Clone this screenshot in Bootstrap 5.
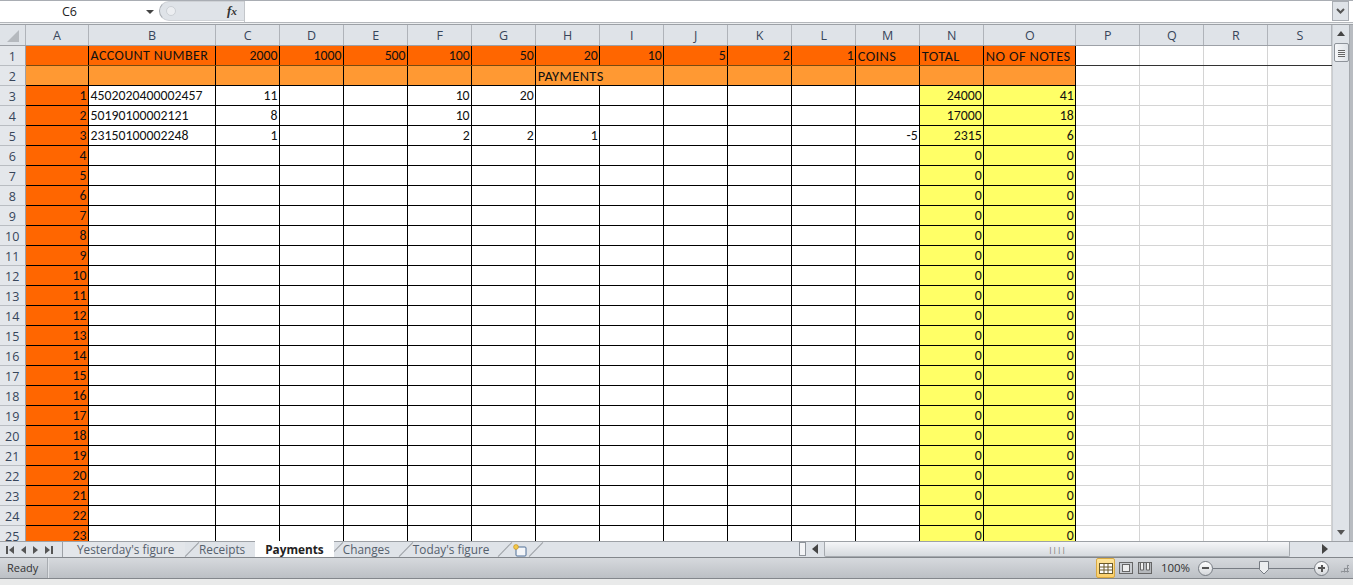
<!DOCTYPE html>
<html lang="en">
<head>
<meta charset="utf-8">
<title>Payments</title>
<link rel="stylesheet" href="https://cdn.jsdelivr.net/npm/bootstrap@5.3.0/dist/css/bootstrap.min.css">
<style>
html,body{height:585px;overflow:hidden;margin:0}
body{font-family:"Liberation Sans",Arial,sans-serif;background:#e9eaea;color:#000}
.xl-formula{height:22px;background:#fff;border-top:1px solid #a9adb3;flex:none}
.xl-name{width:159px;font:12.5px "Open Sans",sans-serif;color:#222;padding-left:62px;line-height:21px;position:relative}
.xl-name i{position:absolute;left:146px;top:9px;border:4px solid transparent;border-top:4px solid #444;border-bottom:0}
.xl-pill{width:85px;background:#dfe3e8;border-radius:11px 0 0 11px;border-left:1px solid #a9adb3;border-top:1px solid #cfd2d6;border-bottom:1px solid #cfd2d6;position:relative;font:italic bold 13px "Liberation Serif",serif;color:#333;text-align:right;padding-right:7px;line-height:18px;margin-bottom:1px}
.xl-pill b{position:absolute;left:6px;top:4px;width:10px;height:10px;border-radius:50%;background:#eceef1;border:1px solid #ccd0d5}
.xl-input{flex:1;border-left:1px solid #c3c6ca}
.xl-fdrop{width:17px;margin-right:4px;background:#dfe3e8;border:1px solid #a9adb3;display:flex;align-items:center;justify-content:center;margin-bottom:1px}
.xl-gap{height:3px;flex:none;background:#eceef0;border-top:1px solid #b4b7bb;border-bottom:1px solid #9da1a6}
.xl-sheet{height:516px;flex:none;overflow:hidden}
.xl-gridwrap{width:1332px;overflow:hidden;height:516px;background:#fff}
.xl-grid{table-layout:fixed;width:1332px}
.xl-grid th,.xl-grid td{height:20px;padding:0 1px 0 2px;line-height:19px;white-space:nowrap;overflow:hidden;box-sizing:border-box}
.xl-grid td{border:1px solid #d4d4d4;text-align:right;font:13.8px Carlito,Lato,sans-serif;color:#111}
.xl-grid thead th{background:#dfe3e8;font:12.5px "Open Sans",sans-serif;color:#37455a;text-align:center;border-right:1px solid #afb3b9;border-bottom:1px solid #9da1a7;font-weight:400;line-height:19px;padding-top:1px}
.xl-grid tbody th{background:#e4e7eb;font:12.5px "Open Sans",sans-serif;color:#37455a;text-align:center;border-right:1px solid #9da1a7;border-bottom:1px solid #b9bdc2;font-weight:400;padding:1px 0 0}
.xl-grid td.bk{border-color:#000}
.xl-grid tr.rule td.bk{border-bottom-color:#7a4a10}
.xl-grid td.txt{text-align:left;padding-left:2px}
.xl-grid td.cap{font-size:14.4px;letter-spacing:.4px;overflow:visible}
.xl-grid td.cap2{font-size:14px}
.xl-o1{background:#ff6600}
.xl-o2{background:#ff9933}
.xl-y{background:#ffff66}
.xl-corner{position:relative}
.xl-corner svg{position:absolute;left:7px;top:5px}
.xl-grid tr.rule td.pl{border-bottom-color:#333}
.xl-vs{width:17px;background:#dfe3e8;border-left:1px solid #c8ccd1;position:relative}
.xl-vthumb{position:absolute;top:18px;left:1px;width:15px;height:19px;background:linear-gradient(90deg,#f6f7f9,#dfe3e8);border:1px solid #8e939a;border-radius:2px}
.xl-vthumb::after{content:"";position:absolute;left:3px;right:3px;top:6px;height:7px;background:repeating-linear-gradient(#666 0 1px,#f2f3f5 1px 2px)}
.xl-up,.xl-dn{position:absolute;left:4px;border:4px solid transparent}
.xl-up{top:6px;border-top:0;border-bottom:5px solid #444}
.xl-dn{bottom:6px;border-bottom:0;border-top:5px solid #555}
.xl-rail{width:4px;background:#b8bcc1;border-left:1px solid #a5a9ae}
.xl-tabs{height:16px;flex:none;background:#dfe3e8;border-top:1px solid #9da1a6;font:11.8px "Open Sans",sans-serif;color:#55606c;line-height:14px;position:relative}
.xl-navs{width:62px;display:flex;gap:7px;align-items:center;padding-left:6px;flex:none}
.xl-tab{position:relative;height:15px;white-space:nowrap;padding:0 0 0 14px}
.xl-tab::before{content:"";position:absolute;left:-3px;top:7px;width:20px;border-top:1px solid #9da1a6;transform:rotate(-46deg)}
.xl-tab.first{padding-left:14px;width:123px;border-left:1px solid #9da1a6;background:#e3e6ea}
.xl-tab.first::before{display:none}
.xl-tab.on{background:#fff;color:#222;font-weight:700;margin-top:-1px;height:16px;padding:1px 10px;margin-left:10px;z-index:1}
.xl-tab.on::before{display:none}
.xl-tab.mv1{margin-left:-5px}
.xl-tab.mv2{margin-left:9px}
.xl-tab.last{margin-left:9px;padding-left:15px;padding-right:18px}
.xl-tab.last::after{content:"";position:absolute;right:-1px;top:7px;width:20px;border-top:1px solid #9da1a6;transform:rotate(-46deg)}
.xl-split{position:absolute;left:799px;top:0;width:7px;height:14px;background:#f3f4f6;border:1px solid #8e939a}
.xl-hl{position:absolute;left:812px;top:2px;border:5px solid transparent;border-left:0;border-right:6px solid #444}
.xl-hr{position:absolute;left:1322px;top:2px;border:5px solid transparent;border-right:0;border-left:6px solid #444}
.xl-hthumb{position:absolute;left:824px;top:0;width:466px;height:15px;background:linear-gradient(#f5f6f8,#d6dade);border:1px solid #a5a9ae;border-top:0;border-radius:0 0 2px 2px;text-align:center;font-size:8px;line-height:14px;color:#666}
.xl-status{height:22px;flex:none;background:linear-gradient(#d6d9dd,#bcc0c5);border-top:1px solid #83878c;border-bottom:1px solid #83878c;font:11px "Open Sans",sans-serif;color:#333;line-height:20px}
.xl-ready{width:48px;padding-left:7px;border-right:1px solid #a8acb1;box-shadow:1px 0 0 #dfe2e5}
.xl-views{margin-left:auto;padding-right:4px}
.xl-v{width:17px;height:20px;display:flex;align-items:center;justify-content:center;margin-left:2px}
.xl-v.on{background:linear-gradient(#fde49a,#fbcf6a);border:1px solid #d9a941;border-radius:2px;width:19px;margin-left:0}
.xl-zoomt{width:39px;text-align:center;margin:0 3px;font-size:11.5px}
.xl-round{width:15px;height:15px;flex:none;border-radius:50%;background:linear-gradient(#fff,#d4d7db);border:1px solid #777c83;position:relative}
.xl-round::before{content:"";position:absolute;left:3px;right:3px;top:5.5px;height:2px;background:#555}
.xl-round.pl::after{content:"";position:absolute;top:3px;bottom:3px;left:5.5px;width:2px;background:#555}
.xl-track{width:101px;height:1px;background:#777c83;position:relative}
.xl-track svg{position:absolute;left:46px;top:-7px}
.xl-grip{width:9px;height:9px;margin-left:11px;background:radial-gradient(circle,#8d9196 0 1px,transparent 1.2px) 0 0/3px 3px;clip-path:polygon(100% 0,100% 100%,0 100%)}
</style>
</head>
<body class="d-flex flex-column">
<div class="xl-formula d-flex">
  <div class="xl-name">C6<i></i></div>
  <div class="xl-pill"><b></b>f<small>x</small></div>
  <div class="xl-input"></div>
  <div class="xl-fdrop"><svg width="9" height="6" viewBox="0 0 9 6"><path d="M1 1l3.5 3.5L8 1" fill="none" stroke="#555" stroke-width="2"/></svg></div>
</div>
<div class="xl-gap"></div>
<div class="xl-sheet d-flex">
  <div class="xl-gridwrap">
  <table class="xl-grid" id="grid"><colgroup><col style="width:25px"><col style="width:63px"><col style="width:127px"><col span="11" style="width:64px"><col style="width:64px"><col style="width:92px"><col span="4" style="width:64px"></colgroup>
  <thead><tr><th class="xl-corner"><svg width="12" height="12"><path d="M12 0v12H0z" fill="#b5b9be"/></svg></th><th>A</th><th>B</th><th>C</th><th>D</th><th>E</th><th>F</th><th>G</th><th>H</th><th>I</th><th>J</th><th>K</th><th>L</th><th>M</th><th>N</th><th>O</th><th>P</th><th>Q</th><th>R</th><th>S</th></tr></thead>
  <tbody id="rows"></tbody></table>
  </div>
  <div class="xl-vs"><i class="xl-up"></i><div class="xl-vthumb"></div><i class="xl-dn"></i></div>
  <div class="xl-rail"></div>
</div>
<div class="xl-tabs d-flex">
  <div class="xl-navs"><svg width="8" height="8"><path d="M0 0h2v8H0zM8 0v8L3 4z" fill="#555"/></svg><svg width="5" height="8"><path d="M5 0v8L0 4z" fill="#555"/></svg><svg width="5" height="8"><path d="M0 0v8l5-4z" fill="#555"/></svg><svg width="8" height="8"><path d="M6 0h2v8H6zM0 0v8l5-4z" fill="#555"/></svg></div>
  <div class="xl-tab first">Yesterday's figure</div>
  <div class="xl-tab">Receipts</div>
  <div class="xl-tab on">Payments</div>
  <div class="xl-tab mv1">Changes</div>
  <div class="xl-tab mv2">Today's figure</div>
  <div class="xl-tab last"><svg width="14" height="13" viewBox="0 0 14 13"><rect x="3" y="3" width="10" height="9" rx="1" fill="#f4f6f9" stroke="#4f6f97"/><circle cx="3" cy="3" r="2.4" fill="#f2c94c" stroke="#c58a12" stroke-width=".6"/></svg></div>
  <div class="xl-split"></div><i class="xl-hl"></i><div class="xl-hthumb">||||</div><i class="xl-hr"></i>
</div>
<div class="xl-status d-flex align-items-center">
  <div class="xl-ready">Ready</div>
  <div class="xl-views d-flex align-items-center">
    <div class="xl-v on"><svg width="14" height="11"><rect x=".5" y=".5" width="13" height="10" fill="#fff" stroke="#6b5a2a"/><path d="M5 0v11M9 0v11M0 4h14M0 7h14" stroke="#6b5a2a"/></svg></div>
    <div class="xl-v"><svg width="14" height="12"><rect x=".5" y=".5" width="13" height="11" fill="#c9ccd0" stroke="#666"/><rect x="3.5" y="2.5" width="7" height="7" fill="#eee" stroke="#666"/></svg></div>
    <div class="xl-v"><svg width="14" height="12"><rect x=".5" y=".5" width="13" height="11" fill="#b5b8bc" stroke="#666"/><path d="M2.500 1v7h3V1M8.500 1v7h3V1" fill="#eee" stroke="#666"/></svg></div>
    <div class="xl-zoomt">100%</div>
    <div class="xl-round"></div><div class="xl-track"><svg width="10" height="14"><path d="M.5.5h9v8L5 13 .5 8.500z" fill="#eceef0" stroke="#777c83"/></svg></div><div class="xl-round pl"></div>
    <div class="xl-grip"></div>
  </div>
</div>
<script>
var h1=['','ACCOUNT NUMBER',2000,1000,500,100,50,20,10,5,2,1,'COINS','TOTAL','NO OF NOTES'];
var data={3:{1:'4502020400002457',2:11,5:10,6:20,13:24000,14:41},4:{1:'50190100002121',2:8,5:10,13:17000,14:18},5:{1:'23150100002248',2:1,5:2,6:2,7:1,12:-5,13:2315,14:6}};
var out='';
for(var r=1;r<=25;r++){
  out+='<tr'+(r==1?' class="rule"':'')+'><th>'+r+'</th>';
  for(var c=0;c<19;c++){
    var v='',k='',span='';
    if(c>14){out+='<td class="pl"></td>';continue;}
    k='bk';
    if(r==1){v=h1[c];k+=' xl-o1';if(c==1)k+=' txt cap cap2';if(c>=12)k+=' txt cap';}
    else if(r==2){k+=' xl-o2';if(c==8)continue;if(c==7){v='PAYMENTS';k+=' txt cap';span=' colspan="2"';}}
    else{
      if(c==0){v=r-2;k+=' xl-o1';}
      else if(c>=13){k+=' xl-y';v=(data[r]&&data[r][c]!==undefined)?data[r][c]:0;}
      else{v=(data[r]&&data[r][c]!==undefined)?data[r][c]:'';if(c==1)k+=' txt';}
    }
    out+='<td class="'+k+'"'+span+'>'+v+'</td>';
  }
  out+='</tr>';
}
document.getElementById('rows').innerHTML=out;
</script>
</body>
</html>
